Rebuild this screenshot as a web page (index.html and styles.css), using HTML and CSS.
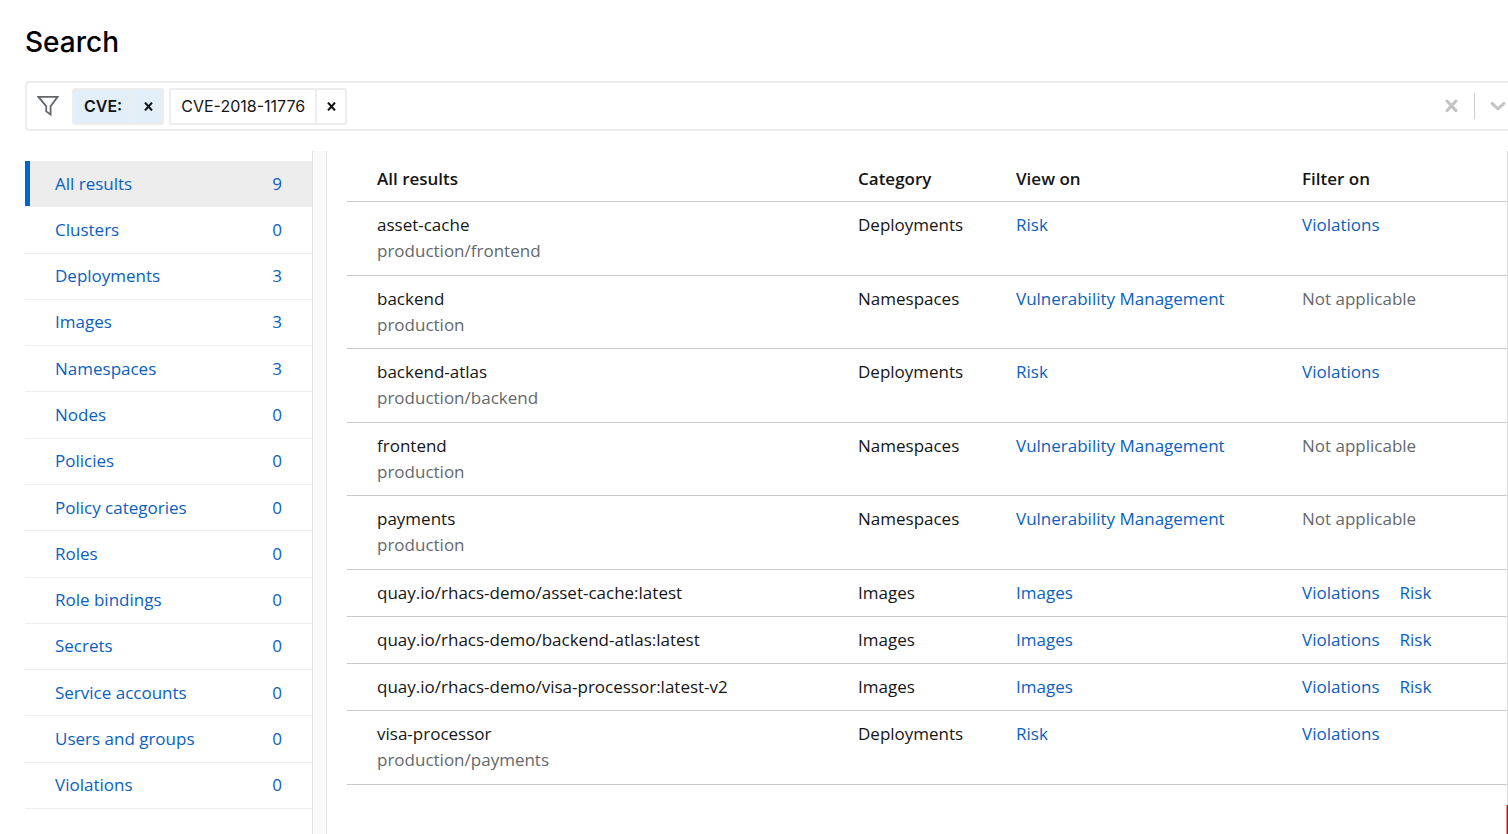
FILE: index.html
```html
<!DOCTYPE html>
<html lang="en">
<head>
<meta charset="utf-8">
<title>Search</title>
<link rel="stylesheet" href="styles.css">
</head>
<body>
<header class="page-header">
  <h1 class="page-title">Search</h1>
  <div class="search-bar" role="search">
    <svg class="filter-icon" width="22" height="22" viewBox="0 0 22 22" aria-hidden="true"><path d="M1.4 1.9H20.6L13.6 11.2V19.6L9.2 16.4V11.2Z" fill="none" stroke="#63676c" stroke-width="1.8"/></svg>
    <div class="chip chip-category">
      <span class="chip-label">CVE:</span>
      <button class="chip-remove" type="button" aria-label="Remove CVE"><svg width="9" height="9" viewBox="0 0 9 9" aria-hidden="true"><path d="M1 .6L8 8.4M8 .6L1 8.4" stroke="#151515" stroke-width="2.1"/></svg></button>
    </div>
    <div class="chip">
      <span class="chip-label">CVE-2018-11776</span>
      <button class="chip-remove" type="button" aria-label="Remove CVE-2018-11776"><svg width="9" height="9" viewBox="0 0 9 9" aria-hidden="true"><path d="M1 .6L8 8.4M8 .6L1 8.4" stroke="#151515" stroke-width="2.1"/></svg></button>
    </div>
    <input class="search-input" type="text" aria-label="Add a search filter">
    <button class="icon-button" type="button" aria-label="Clear all"><svg width="13" height="14" viewBox="0 0 13 14" aria-hidden="true"><path d="M2 2L11 11.6M11 2L2 11.6" stroke="#c4c4c4" stroke-width="3" stroke-linecap="round"/></svg></button>
    <span class="divider"></span>
    <button class="icon-button" type="button" aria-label="Show options"><svg width="16" height="10" viewBox="0 0 16 10" aria-hidden="true"><path d="M2 2.4L8 7.8L14 2.4" fill="none" stroke="#c4c4c4" stroke-width="3" stroke-linecap="round" stroke-linejoin="round"/></svg></button>
  </div>
</header>
<main class="results">
  <nav class="categories" aria-label="Categories">
    <ul class="category-list">
      <li class="category"><a class="category-link current" href="#all" aria-current="page"><span>All results</span><span>9</span></a></li>
      <li class="category"><a class="category-link" href="#clusters"><span>Clusters</span><span>0</span></a></li>
      <li class="category"><a class="category-link" href="#deployments"><span>Deployments</span><span>3</span></a></li>
      <li class="category"><a class="category-link" href="#images"><span>Images</span><span>3</span></a></li>
      <li class="category"><a class="category-link" href="#namespaces"><span>Namespaces</span><span>3</span></a></li>
      <li class="category"><a class="category-link" href="#nodes"><span>Nodes</span><span>0</span></a></li>
      <li class="category"><a class="category-link" href="#policies"><span>Policies</span><span>0</span></a></li>
      <li class="category"><a class="category-link" href="#policy-categories"><span>Policy categories</span><span>0</span></a></li>
      <li class="category"><a class="category-link" href="#roles"><span>Roles</span><span>0</span></a></li>
      <li class="category"><a class="category-link" href="#role-bindings"><span>Role bindings</span><span>0</span></a></li>
      <li class="category"><a class="category-link" href="#secrets"><span>Secrets</span><span>0</span></a></li>
      <li class="category"><a class="category-link" href="#service-accounts"><span>Service accounts</span><span>0</span></a></li>
      <li class="category"><a class="category-link" href="#users-and-groups"><span>Users and groups</span><span>0</span></a></li>
      <li class="category"><a class="category-link" href="#violations"><span>Violations</span><span>0</span></a></li>
    </ul>
  </nav>
  <div class="gutter"></div>
  <section class="pane" aria-label="All results">
    <table class="results-table">
      <colgroup><col><col class="col-category"><col class="col-view"><col class="col-filter"></colgroup>
      <thead>
        <tr><th scope="col">All results</th><th scope="col">Category</th><th scope="col">View on</th><th scope="col">Filter on</th></tr>
      </thead>
      <tbody>
        <tr><td>asset-cache<div class="muted">production/frontend</div></td><td>Deployments</td><td><a href="#risk">Risk</a></td><td><a href="#violations">Violations</a></td></tr>
        <tr><td>backend<div class="muted">production</div></td><td>Namespaces</td><td><a href="#vm">Vulnerability Management</a></td><td class="muted">Not applicable</td></tr>
        <tr><td>backend-atlas<div class="muted">production/backend</div></td><td>Deployments</td><td><a href="#risk">Risk</a></td><td><a href="#violations">Violations</a></td></tr>
        <tr><td>frontend<div class="muted">production</div></td><td>Namespaces</td><td><a href="#vm">Vulnerability Management</a></td><td class="muted">Not applicable</td></tr>
        <tr><td>payments<div class="muted">production</div></td><td>Namespaces</td><td><a href="#vm">Vulnerability Management</a></td><td class="muted">Not applicable</td></tr>
        <tr><td>quay.io/rhacs-demo/asset-cache:latest</td><td>Images</td><td><a href="#images">Images</a></td><td><div class="links"><a href="#violations">Violations</a><a href="#risk">Risk</a></div></td></tr>
        <tr><td>quay.io/rhacs-demo/backend-atlas:latest</td><td>Images</td><td><a href="#images">Images</a></td><td><div class="links"><a href="#violations">Violations</a><a href="#risk">Risk</a></div></td></tr>
        <tr><td>quay.io/rhacs-demo/visa-processor:latest-v2</td><td>Images</td><td><a href="#images">Images</a></td><td><div class="links"><a href="#violations">Violations</a><a href="#risk">Risk</a></div></td></tr>
        <tr><td>visa-processor<div class="muted">production/payments</div></td><td>Deployments</td><td><a href="#risk">Risk</a></td><td><a href="#violations">Violations</a></td></tr>
      </tbody>
    </table>
  </section>
</main>
<div class="side-tab"></div>
</body>
</html>
```
FILE: styles.css
```css
* { box-sizing: border-box; }

body {
  margin: 0;
  min-height: 100vh;
  display: flex;
  flex-direction: column;
  background: #fff;
  color: #151515;
  font-family: "Open Sans", sans-serif;
  font-size: 17px;
  line-height: 26px;
}

a { color: #0a60c2; text-decoration: none; }
a:hover { text-decoration: underline; }
button { font: inherit; cursor: pointer; }

.page-header { padding: 24px 0 20px 25px; }

.page-title {
  margin: 0 0 21px;
  color: #000;
  font-family: Inter, sans-serif;
  font-size: 28px;
  font-weight: 500;
  line-height: 36px;
}

.search-bar {
  display: flex;
  align-items: center;
  height: 50px;
  padding: 0 2px 0 10px;
  border: 2px solid #ededed;
  border-right: 0;
  border-radius: 4px 0 0 4px;
}

.filter-icon { margin-right: 13px; }

.chip {
  display: flex;
  height: 37px;
  border: 2px solid #ededed;
  border-radius: 3px;
  font-family: Inter, sans-serif;
  font-size: 16px;
}
.chip + .chip { margin-left: 5px; }

.chip-label { padding: 3px 10px; }
.chip-category { background: #e2eff9; }
.chip-category .chip-label { font-weight: 600; }

.chip-remove {
  display: flex;
  align-items: center;
  justify-content: center;
  width: 30px;
  padding: 0;
  border: 0;
  border-left: 2px solid #ededed;
  background: transparent;
}

.search-input {
  flex: 1;
  min-width: 0;
  height: 36px;
  margin: 0 8px;
  border: 0;
  outline: 0;
  background: transparent;
  font: inherit;
}

.icon-button {
  display: flex;
  padding: 0;
  border: 0;
  background: transparent;
}

.divider {
  width: 1px;
  height: 26px;
  margin: 0 15px 0 16px;
  background: #ccc;
}

.results {
  flex: 1;
  display: flex;
  padding-left: 25px;
}

.categories {
  display: flex;
  width: 287px;
  padding: 10px 0 25px;
}

.category-list {
  flex: 1;
  display: flex;
  flex-direction: column;
  margin: 0;
  padding: 0;
  list-style: none;
}

.category {
  flex: 1;
  display: flex;
  border-bottom: 1px solid #ededed;
}

.category-link {
  flex: 1;
  display: flex;
  align-items: center;
  justify-content: space-between;
  padding: 0 30px 0 25px;
  border-left: 5px solid transparent;
}
.category-link.current {
  border-left-color: #0066cc;
  background: #ededed;
}

.gutter {
  width: 15px;
  border: 1px solid #e4e4e4;
  border-width: 0 1px;
  background: #fafafa;
}

.pane {
  flex: 1;
  display: flex;
  flex-direction: column;
  padding: 0 0 49px 20px;
  border-right: 1px solid #ddd;
}

.results-table {
  flex: 1;
  width: 100%;
  table-layout: fixed;
  border-collapse: separate;
  border-spacing: 0;
}

.col-category { width: 158px; }
.col-view { width: 286px; }
.col-filter { width: 215px; }

.results-table th,
.results-table td {
  padding: 10px;
  border-bottom: 1px solid #c9c9c9;
  text-align: left;
  vertical-align: top;
}
.results-table th {
  height: 51px;
  padding-top: 15px;
  padding-bottom: 9px;
  font-weight: 600;
}
.results-table th:first-child,
.results-table td:first-child { padding-left: 30px; }

.results-table .muted { color: #65686c; }

.links { display: flex; gap: 20px; }

.side-tab {
  position: fixed;
  right: 0;
  bottom: 0;
  width: 2px;
  height: 29px;
  border-left: 1px solid #e58d8d;
  background: #b80f0f;
}
```
